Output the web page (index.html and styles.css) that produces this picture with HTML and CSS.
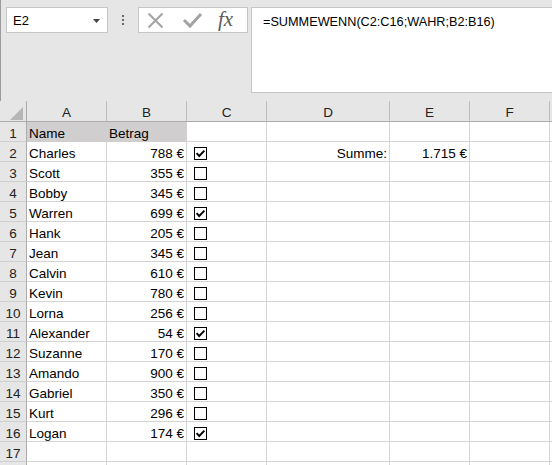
FILE: index.html
```html
<!DOCTYPE html>
<html lang="de">
<head>
<meta charset="utf-8">
<title>Excel SUMMEWENN</title>
<link rel="stylesheet" href="styles.css">
</head>
<body>
<div class="toolbar">
  <div class="namebox"><span>E2</span><svg class="arrow" width="7" height="4" viewBox="0 0 7 4"><path d="M0 0H7L3.5 4Z" fill="#444"/></svg></div>
  <svg class="dots" width="30" height="26" viewBox="0 0 30 26"><rect x="14" y="8" width="2" height="2" fill="#6a6a6a"/><rect x="14" y="12" width="2" height="2" fill="#6a6a6a"/><rect x="14" y="16" width="2" height="2" fill="#6a6a6a"/></svg>
  <div class="fbtns">
    <svg width="68" height="24" viewBox="0 0 68 24"><path d="M9.5 5.5L23.5 19.5M23.5 5.5L9.5 19.5" stroke="#a3a3a3" stroke-width="2" fill="none"/><path d="M45 12L51 18L62 6" stroke="#a3a3a3" stroke-width="3" fill="none"/></svg>
    <span class="fx">fx</span>
  </div>
  <div class="formula">=SUMMEWENN(C2:C16;WAHR;B2:B16)</div>
</div>
<div class="sheet">
  <div class="hd corner"><svg width="26" height="20" viewBox="0 0 26 20"><path d="M23 6V19H10Z" fill="#b6b6b6"/></svg></div>
  <div class="hd">A</div><div class="hd">B</div><div class="hd">C</div><div class="hd">D</div><div class="hd">E</div><div class="hd">F</div><div class="hd last"></div>

  <div class="rh">1</div><div class="c fill">Name</div><div class="c fill">Betrag</div><div class="c"></div><div class="c"></div><div class="c"></div><div class="c"></div><div class="c last"></div>

  <div class="rh">2</div><div class="c">Charles</div><div class="c r">788 €</div><div class="c cbc"><span class="cb"><svg width="11" height="11" viewBox="0 0 11 11"><path d="M1.6 5.2L4.2 8L9.4 2.6" stroke="#000" stroke-width="1.9" fill="none"/></svg></span></div><div class="c r">Summe:</div><div class="c r">1.715 €</div><div class="c"></div><div class="c last"></div>

  <div class="rh">3</div><div class="c">Scott</div><div class="c r">355 €</div><div class="c cbc"><span class="cb"></span></div><div class="c"></div><div class="c"></div><div class="c"></div><div class="c last"></div>

  <div class="rh">4</div><div class="c">Bobby</div><div class="c r">345 €</div><div class="c cbc"><span class="cb"></span></div><div class="c"></div><div class="c"></div><div class="c"></div><div class="c last"></div>

  <div class="rh">5</div><div class="c">Warren</div><div class="c r">699 €</div><div class="c cbc"><span class="cb"><svg width="11" height="11" viewBox="0 0 11 11"><path d="M1.6 5.2L4.2 8L9.4 2.6" stroke="#000" stroke-width="1.9" fill="none"/></svg></span></div><div class="c"></div><div class="c"></div><div class="c"></div><div class="c last"></div>

  <div class="rh">6</div><div class="c">Hank</div><div class="c r">205 €</div><div class="c cbc"><span class="cb"></span></div><div class="c"></div><div class="c"></div><div class="c"></div><div class="c last"></div>

  <div class="rh">7</div><div class="c">Jean</div><div class="c r">345 €</div><div class="c cbc"><span class="cb"></span></div><div class="c"></div><div class="c"></div><div class="c"></div><div class="c last"></div>

  <div class="rh">8</div><div class="c">Calvin</div><div class="c r">610 €</div><div class="c cbc"><span class="cb"></span></div><div class="c"></div><div class="c"></div><div class="c"></div><div class="c last"></div>

  <div class="rh">9</div><div class="c">Kevin</div><div class="c r">780 €</div><div class="c cbc"><span class="cb"></span></div><div class="c"></div><div class="c"></div><div class="c"></div><div class="c last"></div>

  <div class="rh">10</div><div class="c">Lorna</div><div class="c r">256 €</div><div class="c cbc"><span class="cb"></span></div><div class="c"></div><div class="c"></div><div class="c"></div><div class="c last"></div>

  <div class="rh">11</div><div class="c">Alexander</div><div class="c r">54 €</div><div class="c cbc"><span class="cb"><svg width="11" height="11" viewBox="0 0 11 11"><path d="M1.6 5.2L4.2 8L9.4 2.6" stroke="#000" stroke-width="1.9" fill="none"/></svg></span></div><div class="c"></div><div class="c"></div><div class="c"></div><div class="c last"></div>

  <div class="rh">12</div><div class="c">Suzanne</div><div class="c r">170 €</div><div class="c cbc"><span class="cb"></span></div><div class="c"></div><div class="c"></div><div class="c"></div><div class="c last"></div>

  <div class="rh">13</div><div class="c">Amando</div><div class="c r">900 €</div><div class="c cbc"><span class="cb"></span></div><div class="c"></div><div class="c"></div><div class="c"></div><div class="c last"></div>

  <div class="rh">14</div><div class="c">Gabriel</div><div class="c r">350 €</div><div class="c cbc"><span class="cb"></span></div><div class="c"></div><div class="c"></div><div class="c"></div><div class="c last"></div>

  <div class="rh">15</div><div class="c">Kurt</div><div class="c r">296 €</div><div class="c cbc"><span class="cb"></span></div><div class="c"></div><div class="c"></div><div class="c"></div><div class="c last"></div>

  <div class="rh">16</div><div class="c">Logan</div><div class="c r">174 €</div><div class="c cbc"><span class="cb"><svg width="11" height="11" viewBox="0 0 11 11"><path d="M1.6 5.2L4.2 8L9.4 2.6" stroke="#000" stroke-width="1.9" fill="none"/></svg></span></div><div class="c"></div><div class="c"></div><div class="c"></div><div class="c last"></div>

  <div class="rh">17</div><div class="c"></div><div class="c"></div><div class="c"></div><div class="c"></div><div class="c"></div><div class="c"></div><div class="c last"></div>

  <div class="rh"></div><div class="c"></div><div class="c"></div><div class="c"></div><div class="c"></div><div class="c"></div><div class="c"></div><div class="c last"></div>
</div>
</body>
</html>
```
FILE: styles.css
```css
* { box-sizing: border-box; }
html, body { margin: 0; padding: 0; }
body {
  width: 552px;
  height: 465px;
  overflow: hidden;
  background: #e6e6e6;
  font-family: "Liberation Sans", Arial, sans-serif;
  color: #000;
}
.toolbar {
  height: 101px;
  display: flex;
  align-items: flex-start;
  padding: 7px 0 0 5px;
  border-left: 1px solid #9c9c9c;
}
.namebox {
  width: 102px;
  height: 26px;
  flex: none;
  border: 1px solid #c6c6c6;
  background: #fff;
  display: flex;
  align-items: center;
  justify-content: space-between;
  padding: 1px 7px 0 6px;
  font-size: 13px;
}
.arrow { display: block; }
.dots { display: block; flex: none; }
.fbtns {
  width: 110px;
  height: 26px;
  flex: none;
  border: 1px solid #c6c6c6;
  background: #fff;
  display: flex;
  align-items: center;
}
.fbtns svg { display: block; flex: none; }
.fx {
  margin-left: 11px;
  font-family: "Liberation Serif", "Times New Roman", serif;
  font-style: italic;
  font-size: 21px;
  line-height: 24px;
  color: #5c5c5c;
  padding-bottom: 2px;
}
.formula {
  flex: 1;
  height: 86px;
  margin-left: 3px;
  margin-right: -4px;
  border: 1px solid #c6c6c6;
  border-right: none;
  background: #fff;
  padding: 6px 0 0 11px;
  font-size: 12.7px;
  line-height: 16px;
  white-space: nowrap;
}
.sheet {
  display: grid;
  grid-template-columns: 27px 80px 80px 80px 123px 80px 80px 1fr;
  grid-template-rows: 21px;
  grid-auto-rows: 20px;
}
.hd {
  background: #e6e6e6;
  border-right: 1px solid #bdbdbd;
  border-bottom: 1px solid #ababab;
  display: flex;
  align-items: flex-end;
  justify-content: center;
  padding-bottom: 1px;
  font-size: 13.5px;
  line-height: 15px;
  color: #222;
}
.hd.corner { padding: 0; align-items: flex-start; border-right-color: #ababab; }
.hd.corner svg { display: block; }
.hd.last { border-right: none; }
.rh {
  background: #e6e6e6;
  border-right: 1px solid #ababab;
  border-bottom: 1px solid #cfcfcf;
  display: flex;
  align-items: flex-end;
  justify-content: center;
  font-size: 13.5px;
  line-height: 15px;
  color: #222;
}
.c {
  background: #fff;
  border-right: 1px solid #d4d4d4;
  border-bottom: 1px solid #d4d4d4;
  display: flex;
  align-items: flex-end;
  padding: 0 2px;
  font-size: 13.5px;
  line-height: 15px;
  white-space: nowrap;
  overflow: hidden;
}
.c.r { justify-content: flex-end; }
.c.last { border-right: none; }
.c.fill {
  background: #d0cece;
  border-right-color: #d0cece;
  border-bottom-color: #d0cece;
}
.c.cbc { align-items: flex-start; padding: 0; }
.cb {
  display: block;
  width: 13px;
  height: 13px;
  margin: 5px 0 0 7px;
  border: 1px solid #000;
  background: #fff;
}
.cb svg { display: block; }
```
